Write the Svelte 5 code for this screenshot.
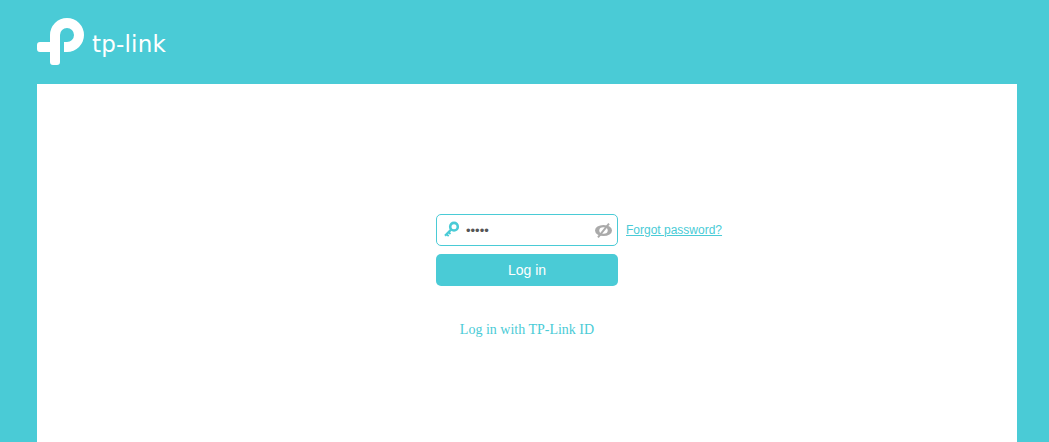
<script>
  // login page, single password field
  let password = $state('admin');
</script>

<div class="page">
  <header class="top">
    <a class="logo" href="#top" aria-label="TP-Link">
      <svg class="mark" width="48" height="49" viewBox="0 0 48 49" aria-hidden="true">
        <path d="M0 28A3 3 0 0 1 3 25H13V18A17 17 0 1 1 30 35H27V25H30A7 7 0 1 0 23 18V45A3 3 0 0 1 20 48H16A3 3 0 0 1 13 45V35H3A3 3 0 0 1 0 32Z" fill="#fff" />
      </svg>
      <span class="word">tp-link</span>
    </a>
  </header>

  <main class="card">
    <form class="login" onsubmit={(e) => e.preventDefault()}>
      <div class="row">
        <div class="field">
          <svg class="key" width="18" height="18" viewBox="0 0 18 18" fill="none" stroke="#4acbd6" aria-hidden="true">
            <circle cx="11" cy="5.700" r="3.800" stroke-width="2.600" />
            <path d="M8.300 8.400L2 14.700" stroke-width="2.200" />
            <path d="M3.600 13.100L5.700 15.200M5.600 11.100L7.500 13" stroke-width="1.800" />
          </svg>
          <input type="password" bind:value={password} aria-label="Password" />
          <svg class="eye" width="17" height="15" viewBox="0 0 17 15" aria-hidden="true">
            <ellipse cx="8.500" cy="7.500" rx="8.500" ry="5.500" fill="#aaa" />
            <ellipse cx="8.500" cy="7.500" rx="4.200" ry="3.200" fill="#fff" />
            <path d="M3 14.300L14 .7" stroke="#aaa" stroke-width="2" />
          </svg>
        </div>
        <a class="forgot" href="#forgot">Forgot password?</a>
      </div>
      <button class="submit" type="submit">Log in</button>
      <a class="tplink-id" href="#id">Log in with TP-Link ID</a>
    </form>
  </main>
</div>

<style>
  :global(body) { margin: 0; background: #4acbd6; overflow: hidden; }

  .page {
    height: 442px;
    display: flex;
    flex-direction: column;
    padding: 0 32px 0 37px;
    background: #4acbd6;
    font-family: "Liberation Sans", Arial, sans-serif;
  }
  .top { height: 84px; flex: 0 0 auto; }
  .logo { display: inline-flex; align-items: flex-start; padding-top: 17px; text-decoration: none; color: #fff; }
  .mark { display: block; }
  .word {
    margin: 9px 0 0 7px;
    font: 400 23px/36px "DejaVu Sans", sans-serif;
    letter-spacing: 0.2px;
  }

  .card { flex: 1; background: #fff; }
  .login { width: 182px; margin-left: 399px; padding-top: 130px; display: flex; flex-direction: column; }
  .row { position: relative; }
  .field {
    box-sizing: border-box;
    height: 32px;
    display: flex;
    align-items: center;
    padding: 0 5px 0 6px;
    gap: 4px;
    border: 1px solid #4acbd6;
    border-radius: 5px;
  }
  .key, .eye { flex: 0 0 auto; }
  .field input {
    flex: 1;
    min-width: 0;
    border: 0;
    outline: 0;
    padding: 0 0 0 1px;
    font: 13px "Liberation Sans", Arial, sans-serif;
    color: #555;
    background: transparent;
  }
  .forgot {
    position: absolute;
    left: 190px;
    top: 9px;
    font-size: 12px;
    line-height: 14px;
    white-space: nowrap;
    color: #4acbd6;
  }
  .submit {
    height: 32px;
    margin-top: 8px;
    border: 0;
    border-radius: 5px;
    background: #4acbd6;
    color: #fff;
    font: 14px "Liberation Sans", Arial, sans-serif;
  }
  .tplink-id {
    margin-top: 36px;
    text-align: center;
    white-space: nowrap;
    font: 14px/16px "Liberation Serif", "Times New Roman", serif;
    color: #4acbd6;
    text-decoration: none;
  }
</style>
